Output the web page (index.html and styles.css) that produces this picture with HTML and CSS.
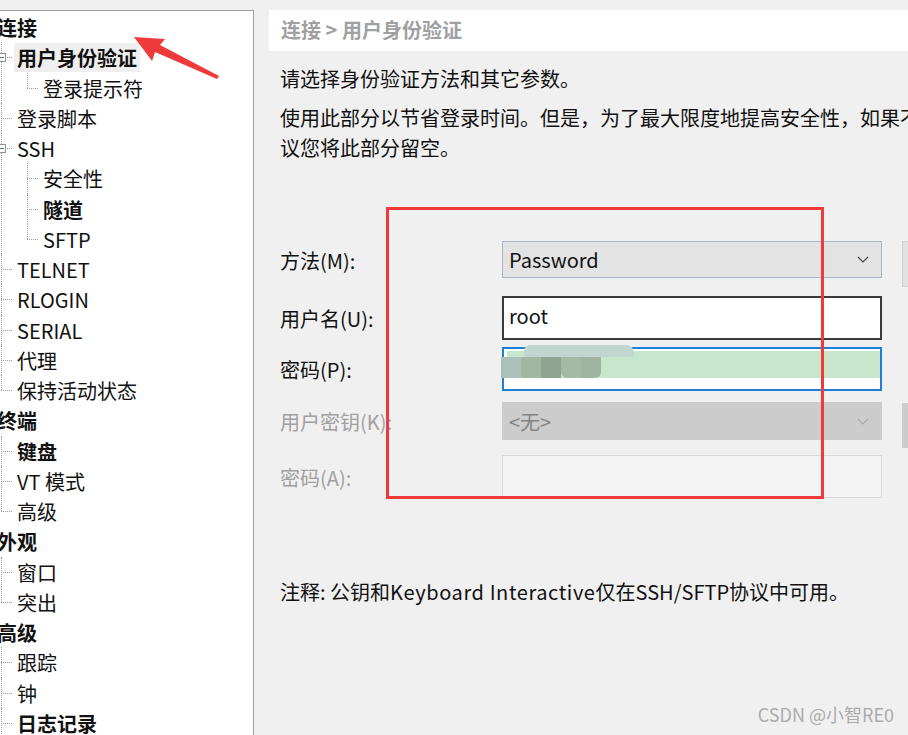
FILE: index.html
```html
<!DOCTYPE html>
<html>
<head>
    <title>会话选项</title>
    <link rel="stylesheet" href="styles.css">
</head>
<body>
    <div class="tree-pane">
        <ul class="tree">
            <li><span class="lbl b">连接</span>
                <ul class="sub">
                    <li class="open"><i class="tog"></i><span class="lbl b sel">用户身份验证</span>
                        <ul class="sub2">
                            <li class="last"><span class="lbl">登录提示符</span></li>
                        </ul>
                    </li>
                    <li><span class="lbl">登录脚本</span></li>
                    <li class="open"><i class="tog"></i><span class="lbl">SSH</span>
                        <ul class="sub2">
                            <li><span class="lbl">安全性</span></li>
                            <li><span class="lbl b">隧道</span></li>
                            <li class="last"><span class="lbl">SFTP</span></li>
                        </ul>
                    </li>
                    <li><span class="lbl">TELNET</span></li>
                    <li><span class="lbl">RLOGIN</span></li>
                    <li><span class="lbl">SERIAL</span></li>
                    <li><span class="lbl">代理</span></li>
                    <li class="last"><span class="lbl">保持活动状态</span></li>
                </ul>
            </li>
            <li><span class="lbl b">终端</span>
                <ul class="sub">
                    <li><span class="lbl b">键盘</span></li>
                    <li><span class="lbl">VT 模式</span></li>
                    <li class="last"><span class="lbl">高级</span></li>
                </ul>
            </li>
            <li><span class="lbl b">外观</span>
                <ul class="sub">
                    <li><span class="lbl">窗口</span></li>
                    <li class="last"><span class="lbl">突出</span></li>
                </ul>
            </li>
            <li><span class="lbl b">高级</span>
                <ul class="sub">
                    <li><span class="lbl">跟踪</span></li>
                    <li><span class="lbl">钟</span></li>
                    <li><span class="lbl b">日志记录</span></li>
                    <li><span class="lbl">文件传输</span></li>
                </ul>
            </li>
        </ul>
    </div>

    <div class="main">
        <div class="crumb">连接 &gt; 用户身份验证</div>
        <div class="intro">
            <p class="p1">请选择身份验证方法和其它参数。</p>
            <p class="p2">使用此部分以节省登录时间。但是，为了最大限度地提高安全性，如果不需要，建<br>议您将此部分留空。</p>
        </div>

        <div class="form">
            <div class="frow r-method">
                <label class="flabel h37">方法(M):</label>
                <div class="combo">
                    <span>Password</span>
                    <svg class="chev" width="12" height="7" viewBox="0 0 12 7"><path d="M1 1 L6 6 L11 1" fill="none" stroke="#444" stroke-width="1.2"/></svg>
                </div>
                <div class="side-btn"></div>
            </div>
            <div class="frow r-user">
                <label class="flabel h44">用户名(U):</label>
                <div class="text-in hover">root</div>
            </div>
            <div class="frow r-pass">
                <label class="flabel h44">密码(P):</label>
                <div class="text-in focus">
                    <div class="fill"></div>
                    <div class="smudge">
                        <span class="s-top"></span>
                        <span class="s-row"><i class="c1"></i><i class="c2"></i><i class="c3"></i><i class="c4"></i><i class="c5"></i></span>
                    </div>
                </div>
            </div>
            <div class="frow r-key">
                <label class="flabel h38 off">用户密钥(K):</label>
                <div class="combo dis">
                    <span>&lt;无&gt;</span>
                    <svg class="chev" width="12" height="7" viewBox="0 0 12 7"><path d="M1 1 L6 6 L11 1" fill="none" stroke="#aaa" stroke-width="1.2"/></svg>
                </div>
                <div class="side-btn"></div>
            </div>
            <div class="frow r-pass2">
                <label class="flabel h43 off">密码(A):</label>
                <div class="text-in dis"></div>
            </div>
        </div>

        <p class="note">注释: 公钥和<span class="lat">Keyboard Interactive</span>仅在SSH/SFTP协议中可用。</p>
    </div>

    <!-- annotation overlays -->
    <div class="mark-box"></div>
    <svg class="mark-arrow" width="908" height="120" viewBox="0 0 908 120">
        <polygon points="134,37 165,39 160,45 219,76 217,79 155,52 152,61" fill="#ef3a3c"/>
    </svg>
    <div class="watermark">CSDN @小智RE0</div>
</body>
</html>
```

FILE: styles.css
```css
html, body {
    margin: 0;
    height: 735px;
    overflow: hidden;
}

body {
    position: relative;
    display: flex;
    align-items: flex-start;
    padding-top: 10px;
    box-sizing: border-box;
    background-color: #f0f0f0;
    font-family: "Noto Sans CJK SC", "Noto Sans", sans-serif;
    font-size: 20px;
    color: #111;
}

p {
    margin: 0;
}

/* left tree */
.tree-pane {
    flex: 0 0 auto;
    width: 254px;
    height: 740px;
    box-sizing: border-box;
    background-color: #fff;
    border-top: 1px solid #a0a0a0;
    border-right: 1px solid #a0a0a0;
    overflow: hidden;
}

.tree, .tree ul {
    list-style: none;
    margin: 0;
    padding: 0;
}

.tree {
    margin: 1px 0 0 -3px;
}

.tree li {
    position: relative;
    line-height: 30.25px;
    white-space: nowrap;
}

.lbl {
    display: inline-block;
    padding: 0 3px;
    line-height: 29px;
    vertical-align: top;
    margin-top: 1px;
}

.tree > li > .lbl {
    padding-left: 0;
}

.b {
    font-weight: bold;
}

.sel {
    background-color: #efefef;
}

.sub > li {
    padding-left: 17px;
}

.sub > li::before,
.sub2 > li::before {
    content: "";
    position: absolute;
    top: 15px;
    width: 11px;
    border-top: 1px dotted #9a9a9a;
}

.sub > li::after,
.sub2 > li::after {
    content: "";
    position: absolute;
    top: 0;
    bottom: 0;
    border-left: 1px dotted #9a9a9a;
}

.sub > li::before,
.sub > li::after {
    left: 4px;
}

.sub2 > li {
    padding-left: 26px;
}

.sub2 > li::before,
.sub2 > li::after {
    left: 13px;
}

.sub > li.last::after,
.sub2 > li.last::after {
    bottom: auto;
    height: 15px;
}

.tog {
    position: absolute;
    z-index: 1;
    left: 0;
    top: 11px;
    width: 9px;
    height: 9px;
    box-sizing: border-box;
    border: 1px solid #919191;
    background-color: #fff;
}

.tog::before {
    content: "";
    position: absolute;
    left: 1px;
    top: 3px;
    width: 5px;
    height: 1px;
    background-color: #4d6fb5;
}

/* right side */
.main {
    flex: 1;
    min-width: 0;
    margin-left: 15px;
}

.crumb {
    height: 41px;
    line-height: 40px;
    padding-left: 12px;
    background-color: #fff;
    color: #a0a0a0;
    font-weight: bold;
}

.intro {
    padding-left: 11px;
    white-space: nowrap;
    line-height: 30px;
}

.p1 {
    margin-top: 13px;
}

.p2 {
    margin-top: 9px;
}

.form {
    margin-top: 78px;
    padding-left: 11px;
}

.frow {
    display: flex;
    align-items: flex-start;
}

.frow > * {
    flex-shrink: 0;
}

.r-method { height: 55px; }
.r-user { height: 51px; }
.r-pass { height: 55px; }
.r-key { height: 53px; }
.r-pass2 { height: 43px; }

.flabel {
    width: 222px;
}

.h37 { line-height: 39px; }
.h44 { line-height: 46px; }
.h38 { line-height: 40px; }
.h43 { line-height: 45px; }

.off {
    color: #a0a0a0;
}

.combo {
    width: 380px;
    height: 37px;
    box-sizing: border-box;
    display: flex;
    align-items: center;
    justify-content: space-between;
    padding: 0 12px 0 6px;
    background-color: #e3e3e3;
    border: 1px solid #a9b5c2;
}

.combo.dis {
    height: 38px;
    background-color: #cccccc;
    border-color: #cccccc;
    color: #838383;
}

.side-btn {
    width: 30px;
    height: 46px;
    margin-left: 20px;
    box-sizing: border-box;
    background-color: #e1e1e1;
    border: 1px solid #d0d0d0;
}

.r-key .side-btn {
    margin-top: 1px;
    height: 45px;
    background-color: #cccccc;
    border-color: #cccccc;
}

.text-in {
    position: relative;
    width: 380px;
    height: 44px;
    box-sizing: border-box;
    padding: 0 6px;
    line-height: 36px;
    background-color: #fff;
    border: 1px solid #aaa;
}

.text-in.hover {
    border: 2px solid #3a3a3a;
    padding-left: 5px;
}

.text-in.focus {
    border: 2px solid #1e7fd8;
}

.text-in.dis {
    height: 43px;
    background-color: #f3f3f3;
    border-color: #d9d9d9;
}

.fill {
    margin: 2px 0 0 -3px;
    height: 27px;
    width: 373px;
    background-color: #c8e6cb;
}

/* blurred-out password scribble */
.smudge {
    position: absolute;
    left: -3px;
    top: -4px;
    width: 140px;
}

.s-top {
    display: block;
    margin-left: 23px;
    width: 110px;
    height: 12px;
    border-radius: 6px 8px 2px 2px;
    background-color: #c0d6ce;
}

.s-row {
    display: flex;
    height: 21px;
}

.s-row i {
    display: block;
    width: 20px;
}

.s-row .c1 { background-color: #aac0b8; }
.s-row .c2 { background-color: #a1b7a1; }
.s-row .c3 { background-color: #8ea592; }
.s-row .c4 { background-color: #a4baa4; border-radius: 0 0 0 6px; }
.s-row .c5 { background-color: #9fb5a1; border-radius: 0 0 6px 0; }

.note {
    margin-top: 79px;
    padding-left: 11px;
    line-height: 30px;
    white-space: nowrap;
}

.lat {
    letter-spacing: 0.6px;
}

/* overlays */
.mark-box {
    position: absolute;
    left: 386px;
    top: 207px;
    width: 438px;
    height: 292px;
    box-sizing: border-box;
    border: 3px solid #ef3a3c;
}

.mark-arrow {
    position: absolute;
    left: 0;
    top: 0;
}

.watermark {
    position: absolute;
    right: 14px;
    bottom: 8px;
    font-size: 18px;
    color: #ababab;
}
```
